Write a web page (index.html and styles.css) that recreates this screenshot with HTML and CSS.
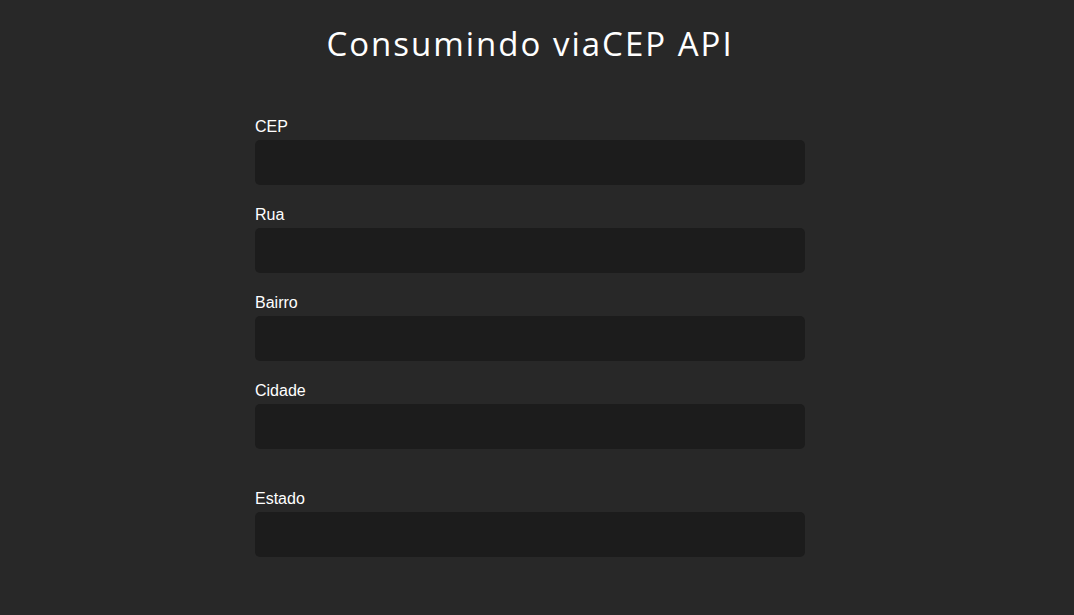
FILE: index.html
```html
<!DOCTYPE html>
<html lang="pt-BR">
<head>
<meta charset="utf-8">
<title>Consumindo viaCEP API</title>
<link rel="stylesheet" href="styles.css">
</head>
<body>
<div class="page">
  <h1 class="title">Consumindo viaCEP API</h1>
  <form class="form">
    <div class="field">
      <label class="label" for="cep">CEP</label>
      <input class="input" id="cep" type="text">
    </div>
    <div class="field">
      <label class="label" for="rua">Rua</label>
      <input class="input" id="rua" type="text">
    </div>
    <div class="field">
      <label class="label" for="bairro">Bairro</label>
      <input class="input" id="bairro" type="text">
    </div>
    <div class="field">
      <label class="label" for="cidade">Cidade</label>
      <input class="input" id="cidade" type="text">
    </div>
    <div class="field field-gap">
      <label class="label" for="estado">Estado</label>
      <input class="input" id="estado" type="text">
    </div>
  </form>
</div>
</body>
</html>
```
FILE: styles.css
```css
html, body {
  margin: 0;
  padding: 0;
  background: #282828;
  height: 100%;
}
body {
  font-family: "Liberation Sans", Arial, sans-serif;
  color: #ffffff;
}
.page {
  display: flex;
  flex-direction: column;
  align-items: center;
  padding-right: 14px;
}
.title {
  margin: 24px 0 0 0;
  font-family: "Open Sans", "DejaVu Sans", sans-serif;
  font-weight: 400;
  font-size: 33px;
  line-height: 40px;
  letter-spacing: 2px;
  color: #ffffff;
}
.form {
  width: 550px;
  margin-top: 53px;
  display: flex;
  flex-direction: column;
  gap: 20px;
}
.field {
  display: flex;
  flex-direction: column;
}
.field-gap {
  margin-top: 20px;
}
.label {
  font-size: 16px;
  line-height: 18px;
  padding-top: 1px;
  margin-bottom: 4px;
}
.input {
  height: 45px;
  box-sizing: border-box;
  border: none;
  border-radius: 5px;
  background: #1c1c1c;
  color: #ffffff;
  padding: 0 10px;
  font-size: 16px;
  outline: none;
}
```
